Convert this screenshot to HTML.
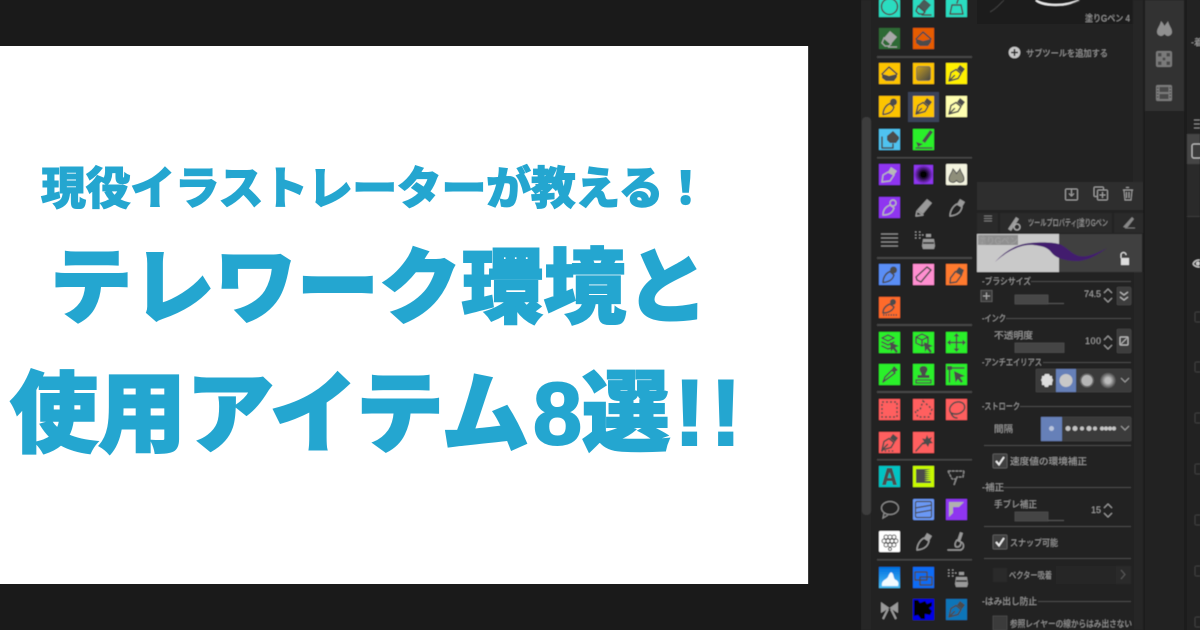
<!DOCTYPE html>
<html lang="ja"><head><meta charset="utf-8"><title>テレワーク環境と使用アイテム8選</title>
<style>
html,body{margin:0;padding:0;width:1200px;height:630px;overflow:hidden;background:#1a1a1a}
#card{position:absolute;left:0;top:46px;width:808px;height:538px;background:#fff;border-right:1px solid #3a3a3a}
.t{position:absolute;white-space:nowrap;color:#24a6d0;font-family:"Liberation Sans","Noto Sans CJK JP",sans-serif;font-weight:900;line-height:1;-webkit-text-stroke:2px #24a6d0}
#ui{position:absolute;left:0;top:0}
text{font-family:"Liberation Sans","Noto Sans CJK JP",sans-serif;fill:#a0a0a0;font-size:9px}
.l{stroke:#4a4a4a;stroke-width:1;fill:none}
.g{fill:none;stroke:#4c4c4c;stroke-width:1.500;stroke-linejoin:round;stroke-linecap:round}
.f{fill:#4c4c4c}
.w{fill:none;stroke:#9a9a9a;stroke-width:1.400;stroke-linejoin:round;stroke-linecap:round}
.wf{fill:#9a9a9a}
</style></head><body>
<svg id="ui" width="1200" height="630" viewBox="0 0 1200 630" xmlns="http://www.w3.org/2000/svg">
<defs>
<filter id="b" x="0" y="0" width="100%" height="100%"><feGaussianBlur stdDeviation="0.5"/></filter>
<g id="pen"><path class="f" d="M14 2l5 4-3 4-5-4z"/><path class="g" d="M10 6.500l5 4-3 5-9 2.500 2-8.500z"/><path class="g" d="M3.500 17.500l5-5"/></g>
<g id="round"><circle class="f" cx="14.500" cy="6" r="3.500"/><path class="g" d="M11 7.500l4 3.500c-1 4-4 7-11 7.500 0-4 2-9 7-11z"/></g>
<g id="marker"><path class="f" d="M13 3l5 3-2 5-6-4z"/><path class="g" d="M9.500 7.500l6 3.500-5 7-6.500 1 .5-5z"/></g>
<g id="bucket"><path class="f" d="M3 11l4 1 3 1 8-2v3l-3 4H7l-4-3z"/><path class="g" d="M3 11l7-7 8 7"/></g>
<g id="eraser"><path class="f" d="M11 3l7 6-6 7-7-6z" fill-opacity=".9"/><path class="g" d="M5 10l7 6-2 2H6l-3-3z"/><path class="g" d="M9 19h9"/></g>
<g id="circ"><circle class="g" cx="10.500" cy="10.500" r="8"/></g>
<g id="drops"><path d="M3 15c0-4 3-6 4-10 2 2 3 3 3.500 5C11 8 13 7 14 5c1 4 4 6 4 10 0 3-3 3.500-4 3.500s-2-.5-3.500-2C9 18 8 18.500 7 18.500c-1 0-4-.5-4-3.500z" fill="#8e8e7a" stroke="#555" stroke-width="1"/></g>
<g id="wpen"><path class="wf" d="M14 2l5 3-3 5-5-3z"/><path class="w" d="M11 7l5 3c-1 4-3 8-12 9 0-5 3-10 7-12z"/></g>
<g id="spray"><path class="wf" d="M13 5h5v3h-5z"/><path d="M10 10h11l1 7-1 3H10l-1-3z" fill="#9a9a9a"/><path d="M10 14h11" stroke="#222" stroke-width="1.500"/><path d="M2 3h1.500M6 3h1.500M2 6h1.500M6 6h1.500M2 9h1.500M6 9h1.500M9 6h1.500" stroke="#9a9a9a" stroke-width="1.200"/></g>
<g id="cursor"><path class="f" d="M11 10l9 4-4 1.500 3 4-2 1.500-3-4-2 3z"/></g>
<g id="dash"><rect x="3" y="3" width="15" height="15" fill="none" stroke="#4c4c4c" stroke-width="1.500" stroke-dasharray="2 2"/></g>
<g id="chk"><rect x="0" y="0" width="14" height="14" rx="1" fill="#3f3f3f" stroke="#5a5a5a"/><path d="M3 7l3 3.500L11 3" fill="none" stroke="#eee" stroke-width="1.800"/></g>
<g id="arr"><path d="M-4 -2l4-4 4 4M-4 3l4 4 4-4" fill="none" stroke="#a0a0a0" stroke-width="1"/></g>
<g id="chev"><path d="M-4-2l4 4 4-4" fill="none" stroke="#a0a0a0" stroke-width="1"/></g>
</defs>
<rect width="1200" height="630" fill="#1a1a1a"/>
<g filter="url(#b)">
<rect x="861" width="339" height="630" fill="#222"/>
<rect x="861" y="0" width="10" height="630" fill="#262626"/>
<rect x="862" y="117" width="9" height="398" rx="4" fill="#3d3d3d"/>
<rect x="871" y="0" width="105" height="630" fill="#232323"/>
<g fill="#474747">
<rect x="877" y="56" width="95" height="2"/><rect x="877" y="157" width="95" height="1.500"/><rect x="877" y="257" width="95" height="2"/><rect x="877" y="324" width="95" height="2"/><rect x="877" y="391" width="95" height="2"/><rect x="877" y="459" width="95" height="1.500"/><rect x="877" y="559" width="95" height="1.500"/>
</g>
<!-- row 0/1 -->
<g transform="translate(879,-4)"><rect width="21" height="21" fill="#2cdcc0"/><use href="#circ"/></g>
<g transform="translate(913,-4)"><rect width="21" height="21" fill="#2cdcc0"/><use href="#eraser"/></g>
<g transform="translate(946,-4)"><rect width="21" height="21" fill="#2cdcc0"/><path class="g" d="M13 1l-2 6M4 18l2-9h9l2 9z"/></g>
<g transform="translate(879,28)"><rect width="21" height="21" fill="#2f6a34"/><path d="M11 3l7 6-6 7-7-6z" fill="#a8a8a8"/><path d="M5 10l7 6-2 2H6l-3-3zM9 19h9" fill="none" stroke="#a8a8a8" stroke-width="1.300"/></g>
<g transform="translate(913,28)"><rect width="21" height="21" fill="#e65c00"/><use href="#bucket"/></g>
<!-- pens -->
<g transform="translate(879,63)"><rect width="21" height="21" fill="#fdc400"/><use href="#bucket"/></g>
<g transform="translate(913,63)"><rect width="21" height="21" fill="#fdc400"/><defs><linearGradient id="gy" x1="0" y1="0" x2="1" y2="1"><stop offset="0" stop-color="#c8a020"/><stop offset="1" stop-color="#444"/></linearGradient></defs><rect x="3.500" y="3.500" width="14" height="14" rx="2" fill="url(#gy)" stroke="#666" stroke-width=".7"/></g>
<g transform="translate(946,63)"><rect width="21" height="21" fill="#fff000"/><use href="#pen"/></g>
<g transform="translate(879,96)"><rect width="21" height="21" fill="#fdc400"/><use href="#round"/></g>
<rect x="908" y="92" width="31" height="30" fill="#3a4358"/>
<g transform="translate(913,96)"><rect width="21" height="21" fill="#fdc400"/><use href="#pen"/></g>
<g transform="translate(946,96)"><rect width="21" height="21" fill="#ffffb0"/><use href="#pen"/></g>
<g transform="translate(879,129)"><rect width="21" height="21" fill="#4fc3f0"/><path class="f" d="M8 7l6-5 6 6v2l-3 4h-6l-3-3z"/><path class="g" d="M3 8v11h11v-4"/></g>
<g transform="translate(913,129)"><rect width="21" height="21" fill="#2bf02b"/><path class="f" d="M17 1l3 2-8 11-3-2z"/><path class="f" d="M3 13l7 2-5 3z"/><path class="g" d="M3 19h16"/></g>
<!-- purple -->
<g transform="translate(879,164)"><rect width="21" height="21" fill="#8f35f0"/><path d="M12 3l6 4-3 4-6-3z" fill="#b8b8b8"/><path d="M9 8l6 3-4 6-8 1 1-7z" fill="none" stroke="#b8b8b8" stroke-width="1.400"/></g>
<g transform="translate(913,164)"><defs><radialGradient id="rp"><stop offset=".25" stop-color="#000"/><stop offset="1" stop-color="#8f35f0"/></radialGradient></defs><rect x="1" y="1" width="19" height="19" fill="url(#rp)"/></g>
<g transform="translate(946,164)"><rect width="21" height="21" rx="1" fill="#f4f4e0"/><use href="#drops"/></g>
<g transform="translate(879,197)"><rect width="21" height="21" fill="#8f35f0"/><circle cx="14" cy="6" r="3" fill="none" stroke="#b8b8b8" stroke-width="1.400"/><path d="M11 8l4 3c-1 4-4 7-11 7 0-4 2-8 7-10z" fill="none" stroke="#b8b8b8" stroke-width="1.400"/></g>
<g transform="translate(913,197)"><path class="wf" d="M14 2l5 4-9 11-6-4z"/><path class="w" d="M4 14l6 4-7 1z"/></g>
<g transform="translate(946,197)"><use href="#wpen"/></g>
<g transform="translate(879,229)"><path d="M2 5h17M2 9h17M2 13h17M2 17h17" stroke="#8c8c8c" stroke-width="1.300"/></g>
<g transform="translate(913,229)"><use href="#spray"/></g>
<!-- row 8,9 -->
<g transform="translate(879,264)"><rect width="21" height="21" fill="#5a8ef5"/><use href="#round"/></g>
<g transform="translate(913,264)"><rect width="21" height="21" fill="#ff8fd0"/><path class="g" d="M14 3l4 3-10 12-4-2-1-3z"/></g>
<g transform="translate(946,264)"><rect width="21" height="21" fill="#ff7a2e"/><use href="#marker"/></g>
<g transform="translate(879,297)"><rect width="21" height="21" fill="#ff6a2a"/><circle class="f" cx="14" cy="5" r="3"/><path class="g" d="M11 7l4 3c-1 3-5 6-11 6 0-4 2-7 7-9z"/><path d="M4 18h15" stroke="#4c4c4c" stroke-width="1.500" stroke-dasharray="1.500 1"/></g>
<!-- green -->
<g transform="translate(879,332)"><rect width="21" height="21" fill="#2bf02b"/><path class="g" d="M3 6l6-3 6 3-6 3zM3 10l6 3 6-3M3 14l6 3 3-1"/><use href="#cursor"/></g>
<g transform="translate(913,332)"><rect width="21" height="21" fill="#2bf02b"/><path class="g" d="M9 2l6 3v6l-6 3-6-3V5zM3 5l6 3 6-3M9 8v6"/><use href="#cursor"/></g>
<g transform="translate(946,332)"><rect width="21" height="21" fill="#2bf02b"/><path class="g" d="M10.500 3v15M3 10.500h15"/><path class="f" d="M10.500 1l3 3.500h-6zM10.500 20l3-3.500h-6zM1 10.500l3.500-3v6zM20 10.500l-3.500-3v6z"/></g>
<g transform="translate(879,364)"><rect width="21" height="21" fill="#2bf02b"/><path class="f" d="M15 2l4 4-3 2-3-3z"/><path class="g" d="M13 6l3 3-8 6-4 3 2-5z"/></g>
<g transform="translate(913,364)"><rect width="21" height="21" fill="#2bf02b"/><path class="f" d="M10.500 2c2.500 0 4 1.500 4 3.500 0 2-2 3-2 5.500h4v3h-12v-3h4c0-2.500-2-3.500-2-5.500 0-2 1.500-3.500 4-3.500z"/><rect x="3" y="16" width="15" height="3" fill="none" stroke="#4c4c4c" stroke-width="1.300"/></g>
<g transform="translate(946,364)"><rect width="21" height="21" fill="#2bf02b"/><path class="f" d="M1 2h5v4H1z"/><path class="g" d="M3.500 6v12M6 4h12"/><path class="f" d="M8 7l11 5-5 1.500 3 4-2 1.500-3-4-2.500 3.500z"/></g>
<!-- red -->
<g transform="translate(879,399)"><rect width="21" height="21" fill="#ff5f5f"/><use href="#dash"/></g>
<g transform="translate(913,399)"><rect width="21" height="21" fill="#ff5f5f"/><path d="M10 2l9 8-3 8H5l-3-6 5-1z" fill="none" stroke="#4c4c4c" stroke-width="1.500" stroke-dasharray="2 2"/></g>
<g transform="translate(946,399)"><rect width="21" height="21" fill="#ff5f5f"/><path class="g" d="M5 14c-4-5 2-12 9-11 5 1 6 6 3 9-3 3-7 4-12 2zM5 14c1 3 3 5 6 5"/></g>
<g transform="translate(879,432)"><rect width="21" height="21" fill="#ff5f5f"/><use href="#pen"/><path d="M2 19h14" stroke="#4c4c4c" stroke-width="1.200" stroke-dasharray="2 1.500"/></g>
<g transform="translate(913,432)"><rect width="21" height="21" fill="#ff5f5f"/><path class="f" d="M14 3l1.500 3.500L19 5l-1.500 3.500L20 11l-3.500.5L15 15l-2-3-3.500.5 1.500-3-2-3 3.500.5z"/><path class="g" d="M10 11l-7 8"/></g>
<!-- text row -->
<g transform="translate(879,466)"><rect width="21" height="21" fill="#00c4c4"/><path fill-rule="evenodd" d="M8 2h5l5 17h-4l-1-4H8l-1 4H3zM10.500 6l-2 6h4z" fill="#4c4c4c"/></g>
<g transform="translate(913,466)"><rect width="21" height="21" fill="#c8fa00"/><path d="M3 3h15l-7 2h7l-7 2h7l-7 2h7l-7 2h7l-7 2h7l-7 2h7v2H3z" fill="#4c4c4c"/></g>
<g transform="translate(946,466)"><path d="M2 5h16M2 5l4 8M18 5l-1 6-6 0-3 8 2-6-4 0" fill="none" stroke="#8c8c8c" stroke-width="1.300" stroke-dasharray="3 .7"/></g>
<g transform="translate(879,499)"><ellipse cx="11" cy="9" rx="8.500" ry="6.500" fill="none" stroke="#8c8c8c" stroke-width="1.200"/><path d="M5 14l-1 5 5-3" fill="none" stroke="#8c8c8c" stroke-width="1.200"/></g>
<g transform="translate(913,499)"><rect width="21" height="21" rx="1" fill="#6a98f5"/><rect x="2.500" y="2.500" width="16" height="16" rx="1.500" fill="none" stroke="#4c4c4c" stroke-width="1.200"/><path d="M2 9l17-3M2 14l17-3" stroke="#4c4c4c" stroke-width="1.200"/></g>
<g transform="translate(946,499)"><rect width="21" height="21" fill="#8f35f0"/><path d="M3 18V3h15zM7 14V8h6z" fill="#b0b0b0" fill-rule="evenodd"/></g>
<g transform="translate(879,531)"><rect width="21" height="21" rx="1" fill="#fff"/><g fill="none" stroke="#555"><circle cx="7" cy="6" r="2"/><circle cx="11" cy="6" r="2"/><circle cx="15" cy="6" r="2"/><circle cx="5" cy="10" r="2"/><circle cx="9" cy="10" r="2"/><circle cx="13" cy="10" r="2"/><circle cx="17" cy="10" r="2"/><circle cx="7" cy="14" r="2"/><circle cx="11" cy="14" r="2"/><circle cx="15" cy="14" r="2"/><circle cx="11" cy="18" r="1.500"/></g></g>
<g transform="translate(913,531)"><use href="#wpen"/></g>
<g transform="translate(946,531)"><path class="wf" d="M14 1l3 1-3 9-3-1z"/><path class="w" d="M11 9l4 2c0 3-1 5-4 5-2 0-3-3 0-7zM2 19h13M15 11c3 1 4 7-1 8"/></g>
<!-- blue -->
<g transform="translate(879,567)"><defs><linearGradient id="sky" x1="0" y1="0" x2="0" y2="1"><stop offset="0" stop-color="#0070e0"/><stop offset="1" stop-color="#4dc0f5"/></linearGradient></defs><rect width="21" height="21" fill="url(#sky)"/><path d="M3 19c-1-6 4-6 6-9 1-3 3-6 4-4 2 1 1 6 4 7 2 1 3 3 2 6z" fill="#f2fbff"/></g>
<g transform="translate(913,567)"><rect width="21" height="21" fill="#0a6cf5"/><path class="g" d="M2 5h12v8H2zM7 10h12v8H7z" stroke="#999"/></g>
<g transform="translate(946,567)"><use href="#spray"/></g>
<g transform="translate(879,599)"><path d="M10.500 9L2 3v11zM10.500 9L19 3v11z" fill="#9a9a9a"/><path d="M9 10l-5 10M12 10l5 10" stroke="#9a9a9a" stroke-width="2"/></g>
<g transform="translate(913,599)"><rect width="21" height="21" fill="#0000e8"/><path d="M1 1h4l2 3 5-2 2 3 5-2v4l-3 2 3 3-2 4-5-1 0 5H8l-3-4-4 1z" fill="#000"/></g>
<g transform="translate(946,599)"><rect width="21" height="21" fill="#0a74b8"/><use href="#pen"/></g>

<!-- sub tool panel -->
<rect x="976" y="0" width="167" height="210" fill="#232323"/>
<rect x="977" y="0" width="156" height="24" fill="#1f1f1f"/>
<rect x="1133" y="0" width="10" height="182" fill="#252525"/>
<path d="M1036 0c6 6 30 7 43 0" fill="none" stroke="#eee" stroke-width="2"/>
<path d="M990 12c6-3 10-8 14-12M1060 6c8 0 14-3 20-6" fill="none" stroke="#444" stroke-width=".8"/>
<text x="1085" y="21.500" textLength="45" lengthAdjust="spacingAndGlyphs" font-size="9">塗りGペン 4</text>
<circle cx="1014.500" cy="52.500" r="5.800" fill="#c8c8c8"/><path d="M1011 52.500h7M1014.500 49v7" stroke="#222" stroke-width="1.500"/>
<text x="1026" y="56.500" textLength="82" lengthAdjust="spacingAndGlyphs" font-size="9">サブツールを追加する</text>
<rect x="977" y="182" width="166" height="28" fill="#2d2d2d"/>
<g fill="none" stroke="#a0a0a0" stroke-width="1">
<rect x="1065.500" y="189" width="12" height="11" rx="1"/><path d="M1071.500 189v7M1069 193.500l2.500 2.500 2.500-2.500"/>
<rect x="1094" y="187" width="9.500" height="9.500" rx="1"/><rect x="1097.500" y="190" width="10" height="10" rx="1" fill="#2d2d2d"/><path d="M1102.500 192v6M1099.500 195h6"/>
<path d="M1123 190h10M1124 190l1 10h6l1-10M1126 187.500h3M1126.500 192v6M1129 192v6"/>
</g>
<rect x="1143" y="0" width="2" height="630" fill="#1d1d1d"/>
<rect x="1145" y="0" width="39" height="111" fill="#333"/>
<rect x="1145" y="111" width="42" height="519" fill="#222"/>
<rect x="1184" y="0" width="3" height="630" fill="#1e1e1e"/>
<g transform="translate(1155,17)"><path d="M2 15c0-4 3-6 4-11 2 2 3 4 3.500 5C10 8 12 6 13 4c1 5 4 7 4 11 0 3-3 4-4 4s-2-.5-3.500-2C8 18.500 7 19 6 19c-1 0-4-1-4-4z" fill="#8f8f8f"/></g>
<g transform="translate(1156,51)"><rect width="16" height="16" rx="2" fill="#7a7a7a"/><g fill="#4a4a4a"><rect x="2" y="2" width="3.500" height="3.500"/><rect x="10.500" y="2" width="3.500" height="3.500"/><rect x="2" y="10.500" width="3.500" height="3.500"/><rect x="10.500" y="10.500" width="3.500" height="3.500"/><circle cx="8" cy="8" r="1.500"/></g></g>
<g transform="translate(1156,85)"><rect width="16" height="16" rx="1.500" fill="#7a7a7a"/><rect x="3.500" y="2" width="9" height="5" fill="#4a4a4a"/><rect x="3.500" y="9" width="9" height="5" fill="#4a4a4a"/><path d="M1 3h1.500M1 6h1.500M1 9h1.500M1 12h1.500M13.500 3h1.500M13.500 6h1.500M13.500 9h1.500M13.500 12h1.500" stroke="#333"/></g>
<!-- right cut -->
<rect x="1187" y="0" width="13" height="630" fill="#222"/>
<text x="1191" y="45.500" font-size="9" fill="#aaa">-着</text>
<path d="M1194 120h6M1194 124h6M1194 128h6" stroke="#8a8a8a" stroke-width="1"/>
<rect x="1187" y="134" width="13" height="30" fill="#454545"/>
<rect x="1192" y="144" width="10" height="14" rx="2" fill="#3a3a3a" stroke="#bdbdbd" stroke-width="1.200"/>
<rect x="1187" y="164" width="13" height="52" fill="#2b2b2b"/>
<rect x="1187" y="216" width="13" height="1" fill="#3a3a3a"/>
<path d="M1193 264c2-4 5-4 7-4M1193 264c2 3 5 3 7 3" stroke="#ccc" stroke-width="1.300" fill="none"/><circle cx="1198" cy="263.500" r="2" fill="#ccc"/>
<g fill="none" stroke="#3d3d3d"><rect x="1195" y="312" width="8" height="10" rx="1"/><rect x="1195" y="362" width="8" height="10" rx="1"/><rect x="1195" y="413" width="8" height="10" rx="1"/><rect x="1195" y="464" width="8" height="10" rx="1"/><rect x="1195" y="515" width="8" height="10" rx="1"/><rect x="1195" y="566" width="8" height="10" rx="1"/><rect x="1195" y="617" width="8" height="10" rx="1"/></g>

<!-- property panel -->
<rect x="976" y="210" width="167" height="420" fill="#232323"/>
<rect x="1134" y="272" width="9" height="358" fill="#262626"/>
<rect x="977" y="213" width="21" height="20" fill="#2c2c2c"/>
<path d="M984 216h8M984 218.500h8M984 221h8" stroke="#777" stroke-width="1"/>
<rect x="1000" y="213" width="112" height="20" fill="#2b2b2b"/>
<rect x="1114" y="213" width="29" height="20" fill="#2b2b2b"/>
<path d="M1008 229l8-12 3 2-8 12zM1006 231h5" fill="#9c9c9c"/><circle cx="1017" cy="227" r="3" fill="none" stroke="#aaa" stroke-width="1.300"/>
<text x="1028" y="226" textLength="80" lengthAdjust="spacingAndGlyphs" font-size="9" fill="#888">ツールプロパティ[塗りGペン</text>
<path d="M1123 227l9-10 2 2-7 9z" fill="#888"/><path d="M1125 228h10" stroke="#777"/>
<rect x="977" y="234" width="82" height="38" fill="#c9c9c9"/>
<rect x="1059" y="234" width="83" height="38" fill="#414141"/>
<rect x="978" y="235" width="40" height="10" fill="#8f8f8f"/>
<text x="978" y="244" textLength="40" lengthAdjust="spacingAndGlyphs" font-size="9" fill="#4a4a4a">塗りGペン</text>
<path d="M995 262c10-11 22-18 35-19 10-1 22-1 29 1 7 2 12 10 20 12 9 2 20-4 28-8-8 6-19 13-30 13-10 0-21-2-26-9-4-5-9-6-18-7-14-1-28 8-38 17z" fill="#431a6e"/>
<rect x="1121" y="258" width="8" height="7" fill="#ddd"/><path d="M1121 258v-3a2.500 2.500 0 0 1 5 0" fill="none" stroke="#ddd" stroke-width="1.200"/>
<!-- section lines -->
<path class="l" d="M1031 281.500h100M1006 318.500h125M1043 362.500h88M1020 406.500h111M984 445.500h147M1003 487.500h128M984 526.500h147M984 558.500h147M1038 601.500h93"/>
<text x="982" y="284.500" textLength="49" lengthAdjust="spacingAndGlyphs" font-size="9.500">-ブラシサイズ</text>
<text x="982" y="321.500" textLength="24" lengthAdjust="spacingAndGlyphs" font-size="9.500">-インク</text>
<text x="982" y="365.500" textLength="60" lengthAdjust="spacingAndGlyphs" font-size="9.500">-アンチエイリアス</text>
<text x="982" y="409.500" textLength="38" lengthAdjust="spacingAndGlyphs" font-size="9.500">-ストローク</text>
<text x="982" y="490.500" textLength="22" lengthAdjust="spacingAndGlyphs" font-size="9.500">-補正</text>
<text x="982" y="604.500" textLength="55" lengthAdjust="spacingAndGlyphs" font-size="9.500">-はみ出し防止</text>
<!-- brush size -->
<rect x="981" y="290.500" width="11" height="11" fill="#3a3a3a" stroke="#5a5a5a"/><path d="M983 296h7M986.500 292.500v7" stroke="#aaa"/>
<rect x="1015" y="295" width="33" height="9" fill="#464646" stroke="#555" stroke-width=".6"/><path d="M1048 303.500h16" stroke="#555"/>
<text x="1084" y="297" textLength="17" font-size="9">74.5</text>
<use href="#arr" x="1108" y="295"/>
<rect x="1117" y="287" width="14" height="18" rx="1.500" fill="#3e3e3e" stroke="#4a4a4a" stroke-width=".6"/><path d="M1120 292l4 3 4-3M1120 297l4 3 4-3" fill="none" stroke="#bbb" stroke-width="1.100"/>
<!-- opacity -->
<text x="994" y="338.500" textLength="39" lengthAdjust="spacingAndGlyphs" font-size="9.500">不透明度</text>
<rect x="1015" y="343" width="49" height="9.500" fill="#444" stroke="#555" stroke-width=".6"/>
<text x="1085" y="344" textLength="16" font-size="9">100</text>
<use href="#arr" x="1108" y="342"/>
<rect x="1117" y="329" width="14" height="24" rx="1.500" fill="#3e3e3e" stroke="#4a4a4a" stroke-width=".6"/><rect x="1120" y="337" width="8" height="8" rx="1" fill="none" stroke="#bbb" stroke-width="1.200"/><path d="M1121 344l6-6" stroke="#bbb"/>
<!-- AA -->
<rect x="1036" y="369" width="95" height="23" rx="1" fill="#3a3a3a" stroke="#4a4a4a" stroke-width=".6"/>
<rect x="1056" y="369" width="20" height="23" fill="#6680b8"/>
<path d="M1042 376h2l1-2h4l1 2h2v2l1 2-1 3v2h-3l-1 2h-3l-1-2h-2v-3l-1-2 1-2z" fill="#dcdcdc"/>
<circle cx="1066" cy="380.500" r="6.500" fill="#c8c8c8"/>
<circle cx="1087" cy="380.500" r="7" fill="#666"/><circle cx="1087" cy="380.500" r="5.500" fill="#b5b5b5"/>
<defs><radialGradient id="sf"><stop offset=".35" stop-color="#bbb"/><stop offset="1" stop-color="#444"/></radialGradient></defs><circle cx="1108" cy="380.500" r="8" fill="url(#sf)"/>
<use href="#chev" x="1125" y="380"/>
<!-- interval -->
<text x="994" y="432" textLength="19" lengthAdjust="spacingAndGlyphs" font-size="9.500">間隔</text>
<rect x="1041" y="417" width="90" height="24" rx="1" fill="#3a3a3a" stroke="#4a4a4a" stroke-width=".6"/>
<rect x="1041" y="417" width="21" height="24" fill="#6680b8"/><circle cx="1051.500" cy="428.500" r="2.500" fill="#b9c4dc"/>
<g fill="#c4c4c4"><circle cx="1068" cy="428.500" r="2.500"/><circle cx="1075" cy="428.500" r="2.500"/><circle cx="1082" cy="428.500" r="2"/><circle cx="1089" cy="428.500" r="2.500"/><circle cx="1095" cy="428.500" r="2"/><circle cx="1102" cy="428.500" r="2"/><circle cx="1106" cy="428.500" r="2"/><circle cx="1110" cy="428.500" r="2"/><circle cx="1114" cy="428.500" r="2"/></g>
<use href="#chev" x="1125" y="428"/>
<!-- checks -->
<use href="#chk" x="993" y="454"/>
<text x="1010" y="464.500" textLength="77" lengthAdjust="spacingAndGlyphs" font-size="9.500">速度値の環境補正</text>
<text x="994" y="507.500" textLength="43" lengthAdjust="spacingAndGlyphs" font-size="9.500">手ブレ補正</text>
<rect x="1015" y="512" width="33" height="9" fill="#444" stroke="#555" stroke-width=".6"/><path d="M1048 520.500h16" stroke="#555"/>
<text x="1091" y="513" textLength="10" font-size="9">15</text>
<use href="#arr" x="1108" y="510"/>
<use href="#chk" x="993" y="535"/>
<text x="1010" y="546" textLength="48" lengthAdjust="spacingAndGlyphs" font-size="9.500">スナップ可能</text>
<rect x="993" y="568" width="14" height="14" fill="#2c2c2c"/>
<text x="1009" y="578.500" textLength="43" lengthAdjust="spacingAndGlyphs" font-size="9" fill="#5c5c5c">ベクター吸着</text>
<rect x="1056" y="566" width="60" height="18" fill="#262626"/>
<rect x="1116" y="566" width="15" height="18" fill="#2a2a2a"/><path d="M1121 570l4 4.500-4 4.500" fill="none" stroke="#5a5a5a"/>
<rect x="993" y="616" width="14" height="14" fill="#3a3a3a" stroke="#555" stroke-width=".6"/>
<text x="1010" y="627" textLength="122" lengthAdjust="spacingAndGlyphs" font-size="9.500">参照レイヤーの線からはみ出さない</text>
</g>
</svg>
<div id="card"></div>
<div class="t" style="left:41px;top:166px;font-size:45px;letter-spacing:-.4px;-webkit-text-stroke-width:1px">現役イラストレーターが教える！</div>
<div class="t" style="left:50px;top:248px;font-size:82px;letter-spacing:.3px">テレワーク環境と</div>
<div class="t" style="left:10px;top:371px;font-size:88px">使用アイテム</div>
<div class="t" style="left:533px;top:370px;font-size:88px">8選</div>
<div class="t" style="left:674px;top:366px;font-size:94px;letter-spacing:5px">!!</div>
</body></html>
